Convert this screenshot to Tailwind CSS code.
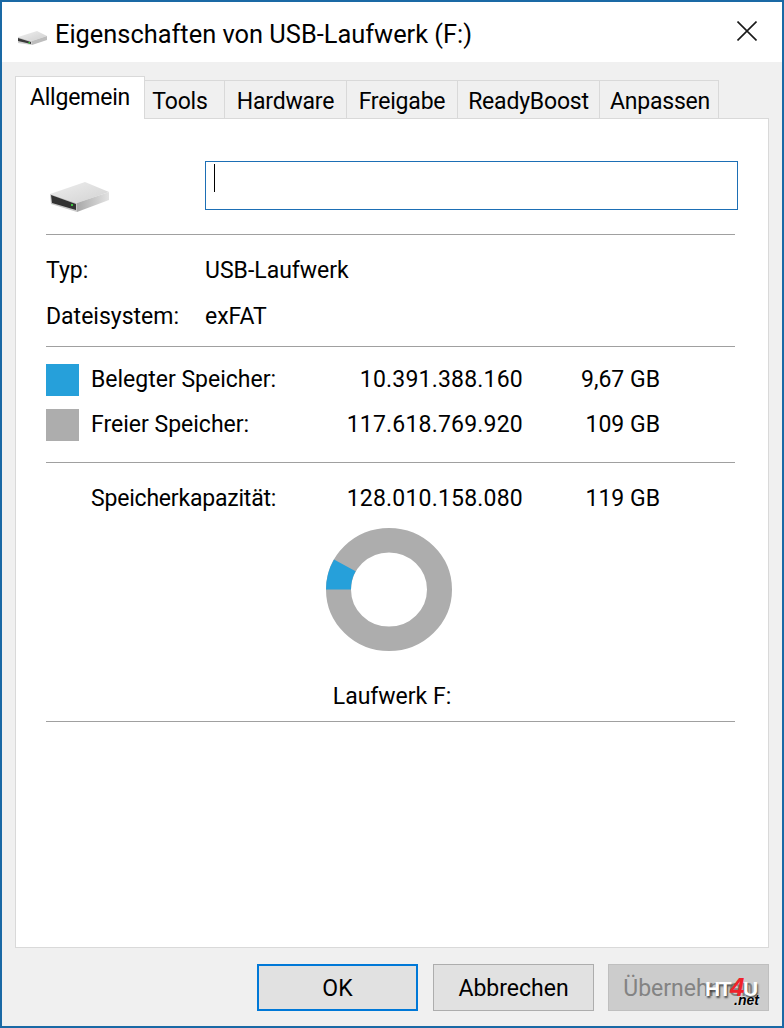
<!DOCTYPE html>
<html lang="de">

<head>
    <meta charset="UTF-8" />
    <script src="https://cdn.jsdelivr.net/npm/@tailwindcss/browser@4"></script>
    <title>Eigenschaften von USB-Laufwerk (F:)</title>
</head>

<body class="bg-white">
    <div class="w-[784px] h-[1028px] border-2 border-[#1a69a5] bg-[#f0f0f0] flex flex-col overflow-hidden relative text-black text-[23px] font-['Roboto',sans-serif]">

        <!-- Titelleiste -->
        <div class="h-[60px] bg-white flex items-center shrink-0 pl-[15px] pr-[25px]">
            <svg class="w-[32px] h-[20px] mt-[7px]" viewBox="0 0 32 20">
                <defs>
                    <linearGradient id="oben-klein" x1="0" y1="0" x2="1" y2="1">
                        <stop offset="0" stop-color="#f0f0f0" />
                        <stop offset="1" stop-color="#cfcfcf" />
                    </linearGradient>
                </defs>
                <polygon points="1,11 20,5 30,10 15,15" fill="url(#oben-klein)" />
                <polygon points="15,15 30,10 30,14 15,19" fill="#bdbdbd" />
                <polygon points="1,11 15,15 15,19 1,17" fill="#d0d0d0" />
                <polygon points="1,12 14,16 14,18 1,15" fill="#3a3a3a" />
                <rect x="11.5" y="16" width="1.5" height="1.5" fill="#39c43c" />
            </svg>
            <span class="ml-[6px] pt-[4px] text-[25.4px]">Eigenschaften von USB-Laufwerk (F:)</span>
            <svg class="w-[20px] h-[20px] ml-auto -mt-[2px]" viewBox="0 0 20 20" fill="none" stroke="#1a1a1a" stroke-width="1.6">
                <path d="M0.5 0.5 L19.5 19.5 M19.5 0.5 L0.5 19.5" />
            </svg>
        </div>

        <!-- Register -->
        <div class="flex items-end h-[57px] pl-[13px] shrink-0 relative z-10 -mb-[1px] tracking-[-0.2px]">
            <div class="w-[130px] h-[43px] bg-white border border-b-0 border-[#d9d9d9] flex items-center justify-center pt-[1px]">Allgemein</div>
            <div class="w-[80px] h-[39px] border-y border-r border-[#d9d9d9] flex items-center justify-center pt-[6px] pr-[9px]">Tools</div>
            <div class="w-[122px] h-[39px] border-y border-r border-[#d9d9d9] flex items-center justify-center pt-[6px]">Hardware</div>
            <div class="w-[111px] h-[39px] border-y border-r border-[#d9d9d9] flex items-center justify-center pt-[6px]">Freigabe</div>
            <div class="w-[142px] h-[39px] border-y border-r border-[#d9d9d9] flex items-center justify-center pt-[6px]">ReadyBoost</div>
            <div class="w-[119px] h-[39px] border-y border-r border-[#d9d9d9] flex items-center justify-center pt-[6px] pl-[2px]">Anpassen</div>
        </div>

        <!-- Inhalt -->
        <div class="mx-[13px] h-[830px] shrink-0 bg-white border border-[#d9d9d9] pl-[30px] flex flex-col">
            <div class="flex mt-[42px] h-[49px] shrink-0">
                <svg class="w-[60px] h-[34px] ml-[4px] mt-[19px]" viewBox="0 0 60 34">
                    <defs>
                        <linearGradient id="oben-gross" x1="0" y1="0" x2="1" y2="1">
                            <stop offset="0" stop-color="#eeeeee" />
                            <stop offset="1" stop-color="#d2d2d2" />
                        </linearGradient>
                        <linearGradient id="seite-gross" x1="0" y1="0" x2="1" y2="0">
                            <stop offset="0" stop-color="#a9a9a9" />
                            <stop offset="1" stop-color="#e2e2e2" />
                        </linearGradient>
                    </defs>
                    <polygon points="0,14 35,2 59,12 27,23" fill="url(#oben-gross)" />
                    <polygon points="27,23 59,12 59,20 27,32" fill="url(#seite-gross)" />
                    <polygon points="0,14 27,23 27,32 1,24" fill="#c8c8c8" />
                    <polygon points="1,15 26,24 26,30 2,23" fill="#333333" />
                    <rect x="21" y="24" width="2" height="2" fill="#39c43c" />
                </svg>
                <div class="ml-[95px] w-[533px] h-[49px] border border-[#1d6fb5] pl-[8px] pt-[2px]">
                    <div class="w-[1px] h-[28px] bg-black"></div>
                </div>
            </div>
            <div class="w-[689px] h-[1px] bg-[#a0a0a0] mt-[24px] shrink-0"></div>

            <div class="flex h-[30px] mt-[21px] items-center"><span class="w-[159px]">Typ:</span><span>USB-Laufwerk</span></div>
            <div class="flex h-[30px] mt-[16px] items-center"><span class="w-[159px]">Dateisystem:</span><span>exFAT</span></div>
            <div class="w-[689px] h-[1px] bg-[#a0a0a0] mt-[14px] shrink-0"></div>

            <div class="grid grid-cols-[45px_220px_212px_137px] grid-rows-[32px] h-[32px] mt-[17px] items-center">
                <div class="w-[33px] h-[32px] bg-[#26a0da]"></div>
                <span>Belegter Speicher:</span>
                <span class="text-right tracking-[0.2px]">10.391.388.160</span>
                <span class="text-right">9,67 GB</span>
            </div>
            <div class="grid grid-cols-[45px_220px_212px_137px] grid-rows-[32px] h-[32px] mt-[13px] items-center">
                <div class="w-[33px] h-[32px] bg-[#adadad]"></div>
                <span>Freier Speicher:</span>
                <span class="text-right tracking-[0.2px]">117.618.769.920</span>
                <span class="text-right">109 GB</span>
            </div>
            <div class="w-[689px] h-[1px] bg-[#a0a0a0] mt-[21px] shrink-0"></div>

            <div class="grid grid-cols-[45px_220px_212px_137px] grid-rows-[30px] h-[30px] mt-[19px] items-center">
                <div></div>
                <span class="pt-[4px] tracking-[-0.2px]">Speicherkapazität:</span>
                <span class="pt-[4px] text-right tracking-[0.2px]">128.010.158.080</span>
                <span class="pt-[4px] text-right">119 GB</span>
            </div>

            <svg class="w-[126px] h-[123px] ml-[280px] mt-[16px] shrink-0" viewBox="0 0 126 126" preserveAspectRatio="none">
                <circle cx="63" cy="63" r="50.5" fill="none" stroke="#adadad" stroke-width="25" />
                <path d="M0 63 A63 63 0 0 1 8 32.3 L29.6 44.3 A38 38 0 0 0 25 63 Z" fill="#26a0da" />
            </svg>

            <div class="w-[692px] h-[30px] mt-[31px] flex items-center justify-center shrink-0">Laufwerk F:</div>
            <div class="w-[689px] h-[1px] bg-[#a0a0a0] mt-[9px] shrink-0"></div>
        </div>

        <!-- Schaltflaechen -->
        <div class="flex justify-end mt-[16px] pr-[13px]">
            <div class="w-[161px] h-[47px] border-2 border-[#0078d7] bg-[#e1e1e1] flex items-center justify-center pt-[4px]">OK</div>
            <div class="w-[161px] h-[47px] ml-[15px] border border-[#adadad] bg-[#e1e1e1] flex items-center justify-center pt-[4px]">Abbrechen</div>
            <div class="w-[161px] h-[47px] ml-[14px] border border-[#bfbfbf] bg-[#cccccc] text-[#838383] flex items-center justify-center pt-[4px]">Übernehmen</div>
        </div>

        <!-- Wasserzeichen -->
        <div class="absolute left-[703px] top-[972px] w-[54px] h-[32px] font-['Liberation_Sans',sans-serif] font-bold leading-none">
            <div class="text-[21px] text-white tracking-[-1.5px] [text-shadow:1px_2px_2px_#444]">HT<span class="text-[#f0222a] text-[26px] italic [text-shadow:none]">4</span>U</div>
            <div class="absolute right-[0px] top-[19px] text-[14px] italic text-black [text-shadow:0_0_2px_#fff]">.net</div>
        </div>
    </div>
</body>

</html>
